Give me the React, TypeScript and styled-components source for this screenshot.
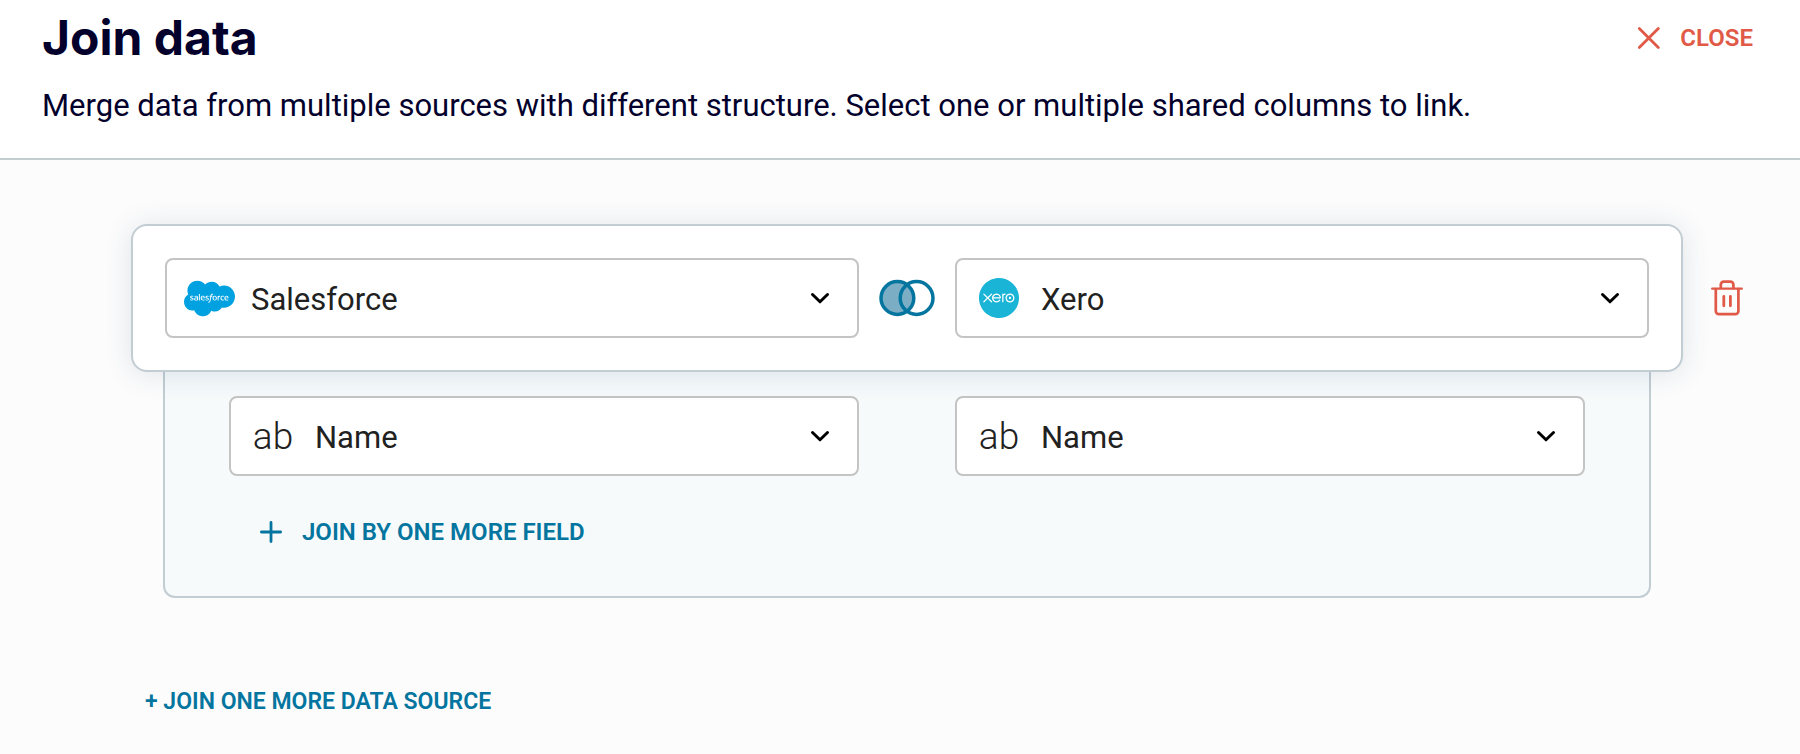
import React from "react";
import styled, { createGlobalStyle } from "styled-components";
import { FaSalesforce } from "react-icons/fa";
import { SiXero } from "react-icons/si";

const color = {
  ink: "#03012c",
  text: "#212121",
  line: "#c2cdd3",
  field: "#c4c4c4",
  blue: "#04759f",
  red: "#e05a47",
};

const GlobalStyle = createGlobalStyle`
  *, *::before, *::after { box-sizing: border-box; }
  body {
    margin: 0;
    background: #fcfcfc;
    color: ${color.text};
    font-family: Roboto, "Liberation Sans", sans-serif;
  }
`;

const Header = styled.header`
  display: flex;
  align-items: flex-start;
  justify-content: space-between;
  gap: 32px;
  padding: 10px 47px 32px 42px;
  background: #fff;
  border-bottom: 2px solid #c2cdd0;
  color: ${color.ink};
`;

const Title = styled.h1`
  margin: 0 0 20px;
  font: 700 48px/56px Inter, sans-serif;
`;

const Subtitle = styled.p`
  margin: 0;
  font-size: 31px;
  line-height: 40px;
`;

const TextButton = styled.button<{ $tone: "blue" | "red" }>`
  display: inline-flex;
  align-items: center;
  gap: 20px;
  height: 40px;
  padding: 0;
  border: 0;
  background: none;
  color: ${(p) => color[p.$tone]};
  font: 600 24px/40px Roboto, sans-serif;
  text-transform: uppercase;
  white-space: nowrap;
  cursor: pointer;
`;

const CloseButton = styled(TextButton)`
  height: 56px;
`;

const Main = styled.main`
  padding: 64px 49px 32px 131px;
`;

const Join = styled.section`
  display: grid;
  grid-template-columns: minmax(0, 1fr) 48px;
  column-gap: 20px;
  align-items: center;
`;

const SourceCard = styled.div`
  position: relative;
  z-index: 1;
  display: grid;
  grid-template-columns: minmax(0, 1fr) 96px minmax(0, 1fr);
  align-items: center;
  justify-items: center;
  padding: 32px;
  background: #fff;
  border: 2px solid ${color.line};
  border-radius: 16px;
  box-shadow: 0 2px 28px rgba(40, 80, 110, 0.14);
`;

const FieldPanel = styled.div`
  grid-column: 1;
  margin: 0 32px;
  padding: 24px 64px 44px;
  background: #f6fafb;
  border: 2px solid ${color.line};
  border-top: 0;
  border-radius: 0 0 12px 12px;
`;

const FieldRow = styled.div`
  display: grid;
  grid-template-columns: minmax(0, 1fr) minmax(0, 1fr);
  column-gap: 96px;
`;

const SelectBox = styled.div`
  position: relative;
  width: 100%;
`;

const Select = styled.select`
  display: block;
  width: 100%;
  height: 80px;
  padding: 4px 72px 0 84px;
  appearance: none;
  background: #fff;
  border: 2px solid ${color.field};
  border-radius: 8px;
  color: ${color.text};
  font: 400 31px/40px Roboto, sans-serif;
  cursor: pointer;
`;

const LeadIcon = styled.span`
  position: absolute;
  inset: 0 auto 0 0;
  display: flex;
  align-items: center;
  justify-content: center;
  width: 88px;
  pointer-events: none;
`;

const Arrow = styled.svg`
  position: absolute;
  top: 0;
  right: 28px;
  width: 22px;
  height: 80px;
  pointer-events: none;
`;

const SalesforceLogo = styled(FaSalesforce)`
  width: 51px;
  height: 41px;
  color: #00a1e0;
`;

const XeroLogo = styled(SiXero)`
  width: 40px;
  height: 40px;
  color: #1ab4d7;
`;

const TextType = styled.span`
  padding-top: 2px;
  font-size: 37px;
  font-weight: 350;
  line-height: 40px;
`;

const IconButton = styled.button`
  display: flex;
  align-items: center;
  justify-content: center;
  width: 48px;
  height: 48px;
  padding: 0;
  border: 0;
  background: none;
  color: ${color.red};
  cursor: pointer;
`;

const AddField = styled(TextButton)`
  margin: 36px 0 0 31px;
`;

const AddSource = styled(TextButton)`
  margin: 84px 0 0 14px;
  font-size: 23px;
`;

type DropdownProps = {
  label: string;
  options: string[];
  icon: React.ReactNode;
};

function Dropdown({ label, options, icon }: DropdownProps) {
  return (
    <SelectBox>
      <Select aria-label={label} defaultValue={options[0]}>
        {options.map((o) => (
          <option key={o}>{o}</option>
        ))}
      </Select>
      <LeadIcon aria-hidden="true">{icon}</LeadIcon>
      <Arrow viewBox="0 0 22 80" aria-hidden="true">
        <path
          d="M3.5 36.5 11 43.8l7.5-7.3"
          fill="none"
          stroke="#000"
          strokeWidth="3"
          strokeLinecap="round"
          strokeLinejoin="round"
        />
      </Arrow>
    </SelectBox>
  );
}

const LeftJoinIcon = () => (
  <svg width="56" height="38" viewBox="0 0 56 38" role="img" aria-label="Left join">
    <circle cx="18.4" cy="19" r="16.4" fill="#7badc5" />
    <g fill="none" stroke={color.blue} strokeWidth="3.5">
      <circle cx="18.4" cy="19" r="16.4" />
      <circle cx="37.6" cy="19" r="16.4" />
    </g>
  </svg>
);

const CrossIcon = () => (
  <svg width="22" height="22" viewBox="0 0 22 22" aria-hidden="true">
    <path d="M1.3 1.5l19 19M20.3 1.5l-19 19" stroke="currentColor" strokeWidth="2.8" strokeLinecap="round" />
  </svg>
);

const PlusIcon = () => (
  <svg width="22" height="22" viewBox="0 0 22 22" aria-hidden="true">
    <path d="M11 1.4v19.2M1.4 11h19.2" stroke="currentColor" strokeWidth="2.8" strokeLinecap="round" />
  </svg>
);

const TrashIcon = () => (
  <svg width="32" height="36" viewBox="0 0 32 36" fill="none" stroke="currentColor" strokeLinecap="round" aria-hidden="true">
    <path d="M1.2 8.6h29.6" strokeWidth="2.4" />
    <path d="M9.8 8V4.6a3 3 0 0 1 3-3h6.6a3 3 0 0 1 3 3V8" strokeWidth="2.7" />
    <path d="M4.8 9v22a3.2 3.2 0 0 0 3.2 3.2h16.2a3.2 3.2 0 0 0 3.2-3.2V9" strokeWidth="2.7" />
    <path d="M12.8 16.4v9.4M19.4 16.4v9.4" strokeWidth="2.8" />
  </svg>
);

export default function App() {
  return (
    <>
      <GlobalStyle />
      <Header>
        <div>
          <Title>Join data</Title>
          <Subtitle>
            Merge data from multiple sources with different structure. Select one or multiple shared columns to link.
          </Subtitle>
        </div>
        <CloseButton type="button" $tone="red">
          <CrossIcon />
          Close
        </CloseButton>
      </Header>
      <Main>
        <Join>
          <SourceCard>
            <Dropdown label="Left data source" options={["Salesforce", "Xero"]} icon={<SalesforceLogo />} />
            <LeftJoinIcon />
            <Dropdown label="Right data source" options={["Xero", "Salesforce"]} icon={<XeroLogo />} />
          </SourceCard>
          <IconButton type="button" aria-label="Delete join">
            <TrashIcon />
          </IconButton>
          <FieldPanel>
            <FieldRow>
              <Dropdown label="Left field" options={["Name"]} icon={<TextType>ab</TextType>} />
              <Dropdown label="Right field" options={["Name"]} icon={<TextType>ab</TextType>} />
            </FieldRow>
            <AddField type="button" $tone="blue">
              <PlusIcon />
              Join by one more field
            </AddField>
          </FieldPanel>
        </Join>
        <AddSource type="button" $tone="blue">
          + Join one more data source
        </AddSource>
      </Main>
    </>
  );
}
